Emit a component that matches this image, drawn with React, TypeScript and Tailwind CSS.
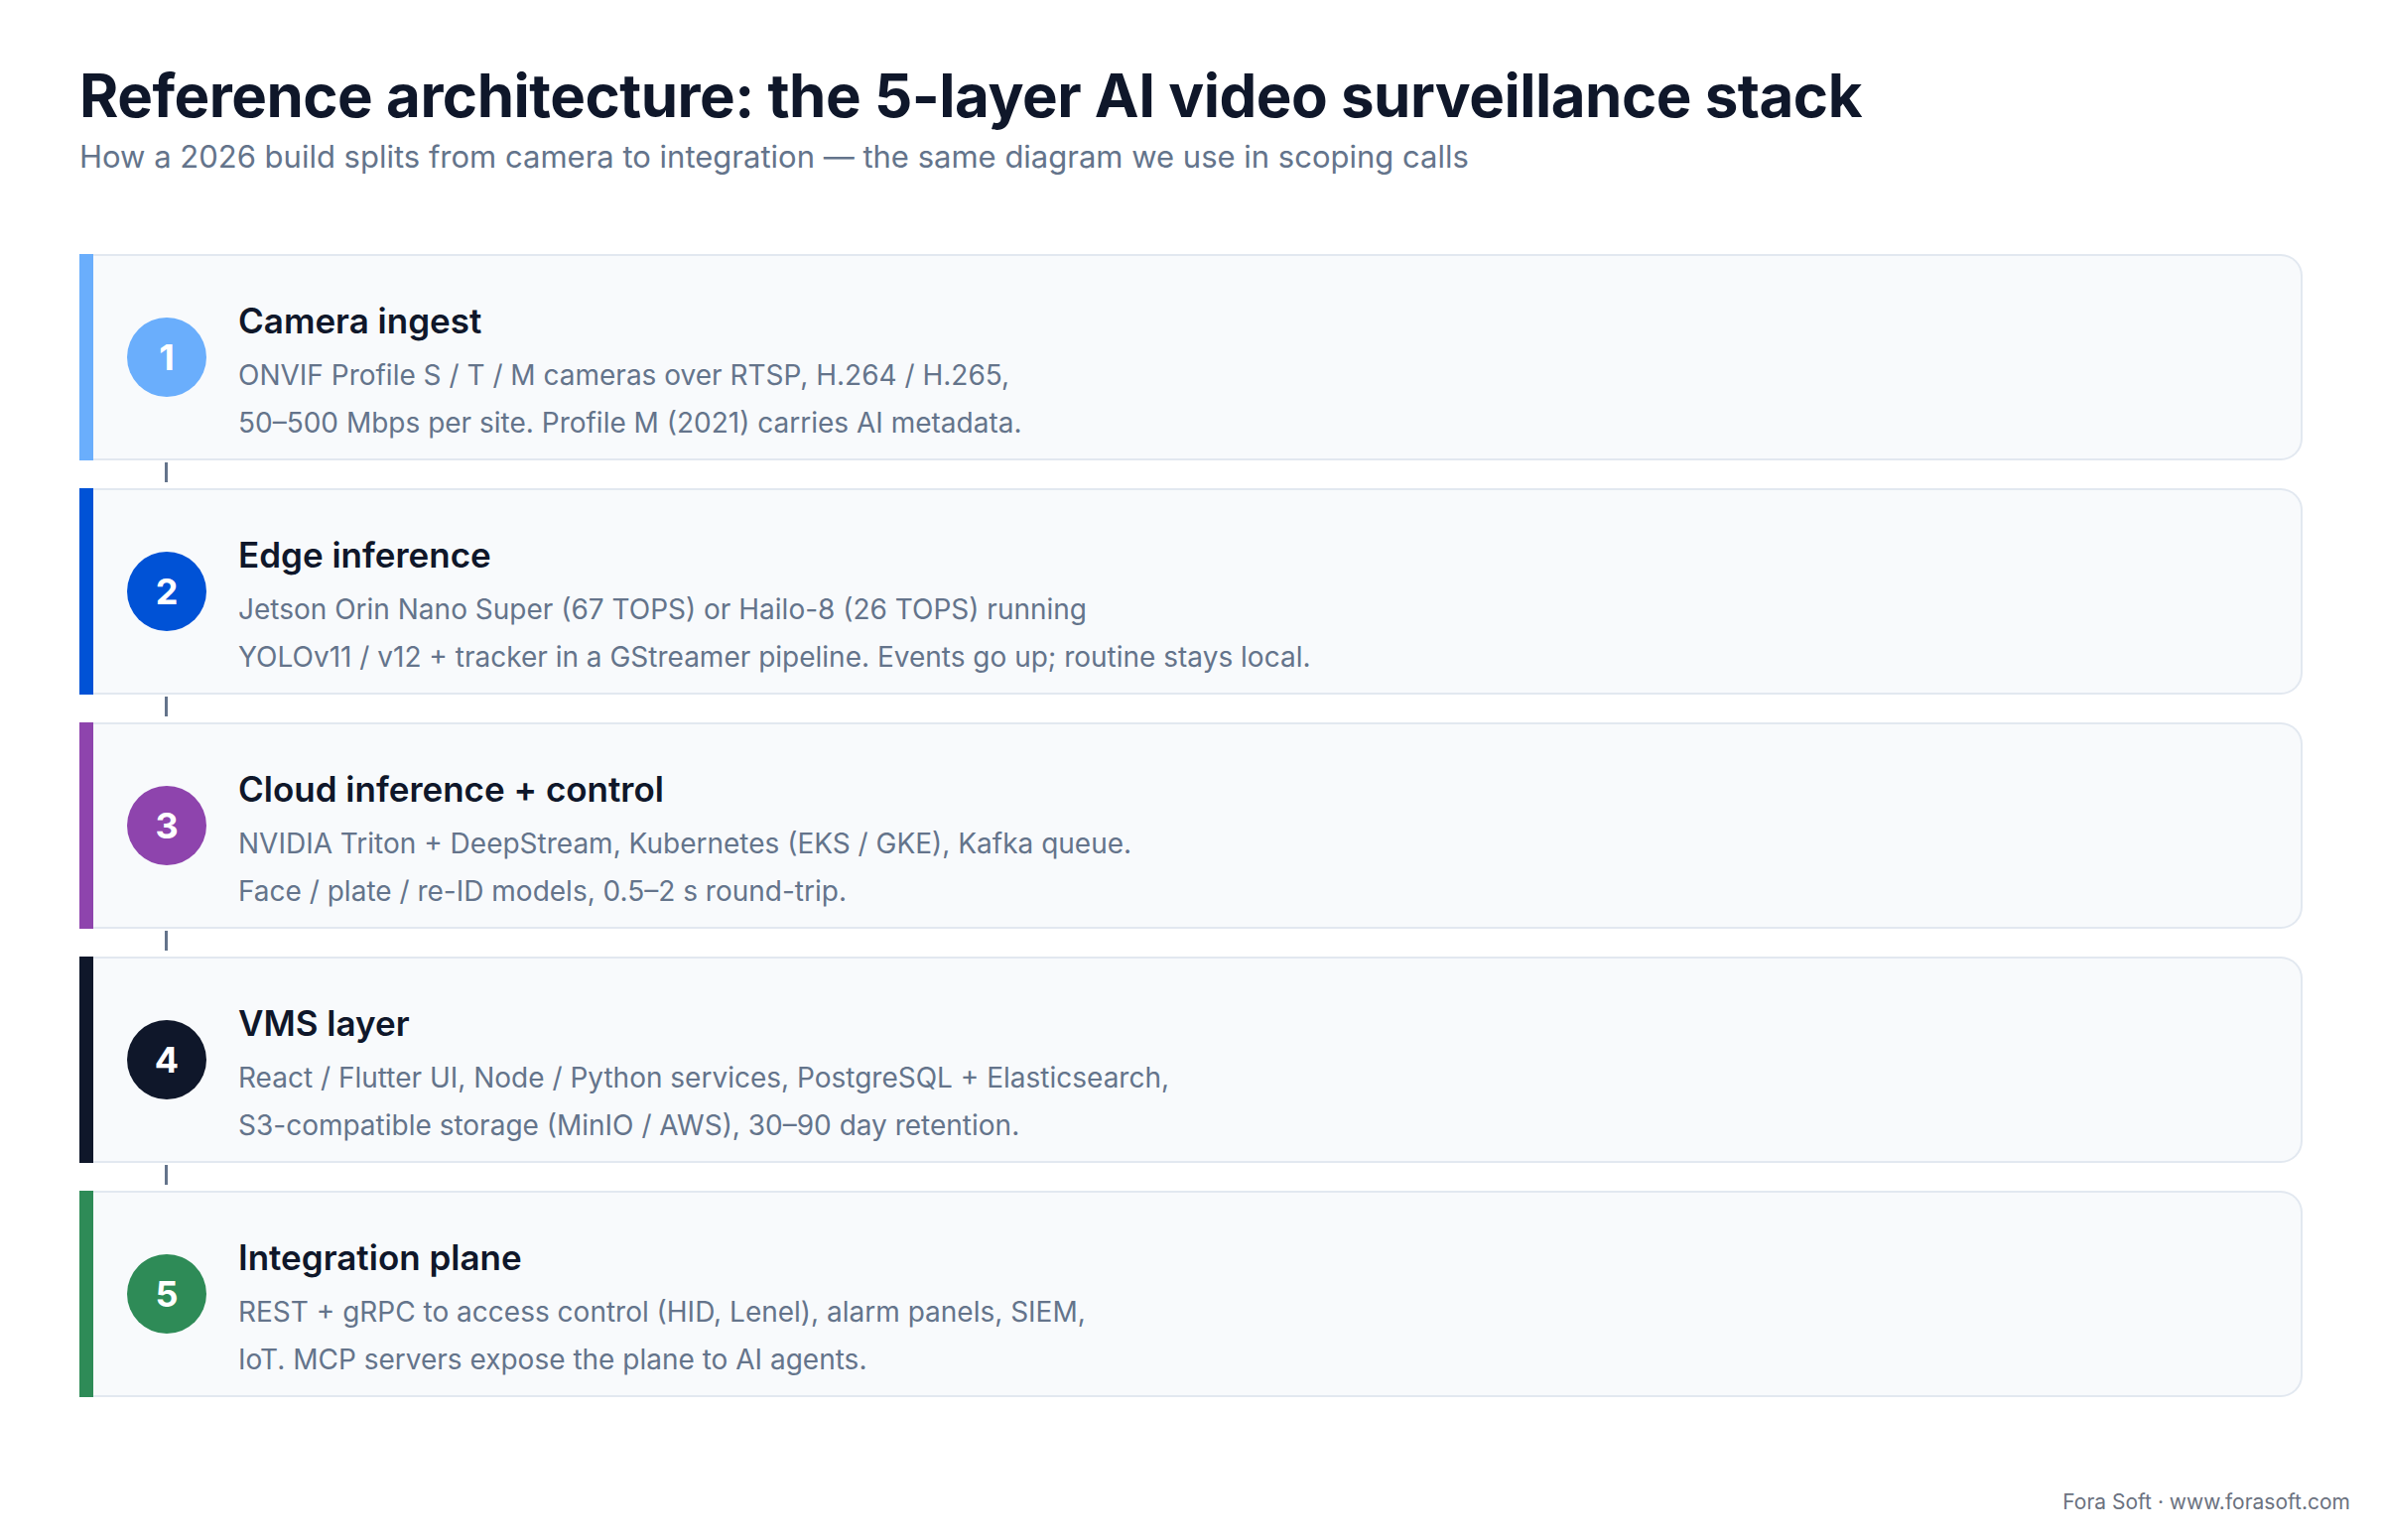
import React from "react";

const layers = [
  { n: 1, color: "bg-[#6aaefc]", title: "Camera ingest", l1: "ONVIF Profile S / T / M cameras over RTSP, H.264 / H.265,", l2: "50–500 Mbps per site. Profile M (2021) carries AI metadata." },
  { n: 2, color: "bg-[#0052d6]", title: "Edge inference", l1: "Jetson Orin Nano Super (67 TOPS) or Hailo-8 (26 TOPS) running", l2: "YOLOv11 / v12 + tracker in a GStreamer pipeline. Events go up; routine stays local." },
  { n: 3, color: "bg-[#8e44ad]", title: "Cloud inference + control", l1: "NVIDIA Triton + DeepStream, Kubernetes (EKS / GKE), Kafka queue.", l2: "Face / plate / re-ID models, 0.5–2 s round-trip." },
  { n: 4, color: "bg-[#0f172a]", title: "VMS layer", l1: "React / Flutter UI, Node / Python services, PostgreSQL + Elasticsearch,", l2: "S3-compatible storage (MinIO / AWS), 30–90 day retention." },
  { n: 5, color: "bg-[#2e8b57]", title: "Integration plane", l1: "REST + gRPC to access control (HID, Lenel), alarm panels, SIEM,", l2: "IoT. MCP servers expose the plane to AI agents." },
];

export default function App() {
  return (
    <div className="w-[2400px] h-[1552px] bg-white relative" style={{ fontFamily: "Inter, 'Noto Sans', sans-serif" }}>
      <div className="px-[80px] pt-[58px]">
        <h1 className="text-[60px] leading-[76px] font-bold text-[#0f172a] tracking-[-0.5px]">Reference architecture: the 5-layer AI video surveillance stack</h1>
        <p className="text-[31px] leading-[40px] text-[#64748b] mt-[4px]">How a 2026 build splits from camera to integration — the same diagram we use in scoping calls</p>
        <div className="mt-[78px] flex flex-col">
          {layers.map((l, i) => (
            <div key={l.n} className="flex flex-col">
              {i > 0 && (
                <div className="h-[28px] flex items-stretch">
                  <div className="ml-[86px] w-[3px] bg-[#64748b] my-[2px] mb-[6px]" />
                </div>
              )}
              <div className="h-[208px] flex bg-[#f8fafc] border-2 border-l-0 border-[#e2e8f0] rounded-r-[22px]">
                <div className={`w-[14px] ${l.color} -my-[2px]`} />
                <div className="w-[146px] flex items-center pl-[34px]">
                  <div className={`w-[80px] h-[80px] rounded-full ${l.color} flex items-center justify-center text-white text-[36px] font-bold`}>{l.n}</div>
                </div>
                <div className="pt-[43px]">
                  <div className="text-[35px] leading-[44px] font-semibold text-[#0f172a]">{l.title}</div>
                  <div className="mt-[9px] text-[28px] leading-[48px] text-[#64748b]">
                    <div>{l.l1}</div>
                    <div>{l.l2}</div>
                  </div>
                </div>
              </div>
            </div>
          ))}
        </div>
      </div>
      <div className="absolute right-[32px] top-[1498px] text-[21px] text-[#6b7280]">Fora Soft · www.forasoft.com</div>
    </div>
  );
}
